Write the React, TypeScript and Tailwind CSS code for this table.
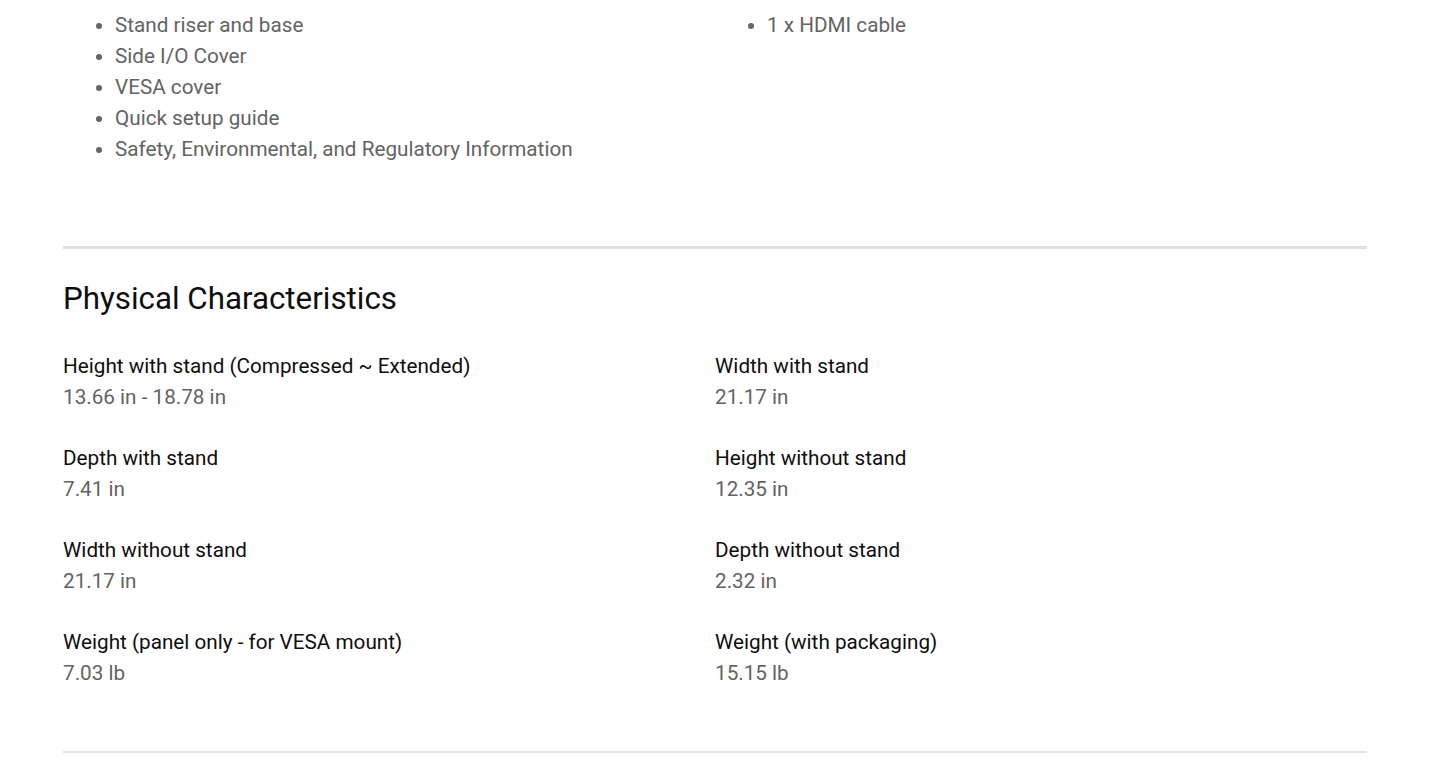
const inBox = [
  "Stand riser and base",
  "Side I/O Cover",
  "VESA cover",
  "Quick setup guide",
  "Safety, Environmental, and Regulatory Information",
];

const cables = ["1 x HDMI cable"];

const specs = [
  { label: "Height with stand (Compressed ~ Extended)", value: "13.66 in - 18.78 in" },
  { label: "Width with stand", value: "21.17 in" },
  { label: "Depth with stand", value: "7.41 in" },
  { label: "Height without stand", value: "12.35 in" },
  { label: "Width without stand", value: "21.17 in" },
  { label: "Depth without stand", value: "2.32 in" },
  { label: "Weight (panel only - for VESA mount)", value: "7.03 lb" },
  { label: "Weight (with packaging)", value: "15.15 lb" },
];

function BulletList({ items }: { items: string[] }) {
  return (
    <ul className="list-disc pl-[52px] marker:text-[#666]">
      {items.map((item) => (
        <li key={item}>{item}</li>
      ))}
    </ul>
  );
}

export default function App() {
  return (
    <div className="min-h-screen bg-white font-['Roboto',sans-serif] text-[20.7px] leading-[31px] text-[#636363]">
      <div className="ml-[63px] w-[1304px]">
        {/* Что в коробке */}
        <div className="grid grid-cols-2 pt-[10px]">
          <BulletList items={inBox} />
          <BulletList items={cables} />
        </div>

        <hr className="mt-[81px] h-[3px] border-0 bg-[#e0e0e0]" />

        <h2 className="mt-[32px] text-[31.3px] leading-[36px] text-[#0e0e0e]">
          Physical Characteristics
        </h2>

        <div className="mt-[34px] grid grid-cols-2 gap-y-[30px]">
          {specs.map((s) => (
            <div key={s.label}>
              <div className="text-[#0e0e0e]">{s.label}</div>
              <div>{s.value}</div>
            </div>
          ))}
        </div>

        <hr className="mt-[62px] h-[2px] border-0 bg-[#e4e4e4]" />
      </div>
    </div>
  );
}
